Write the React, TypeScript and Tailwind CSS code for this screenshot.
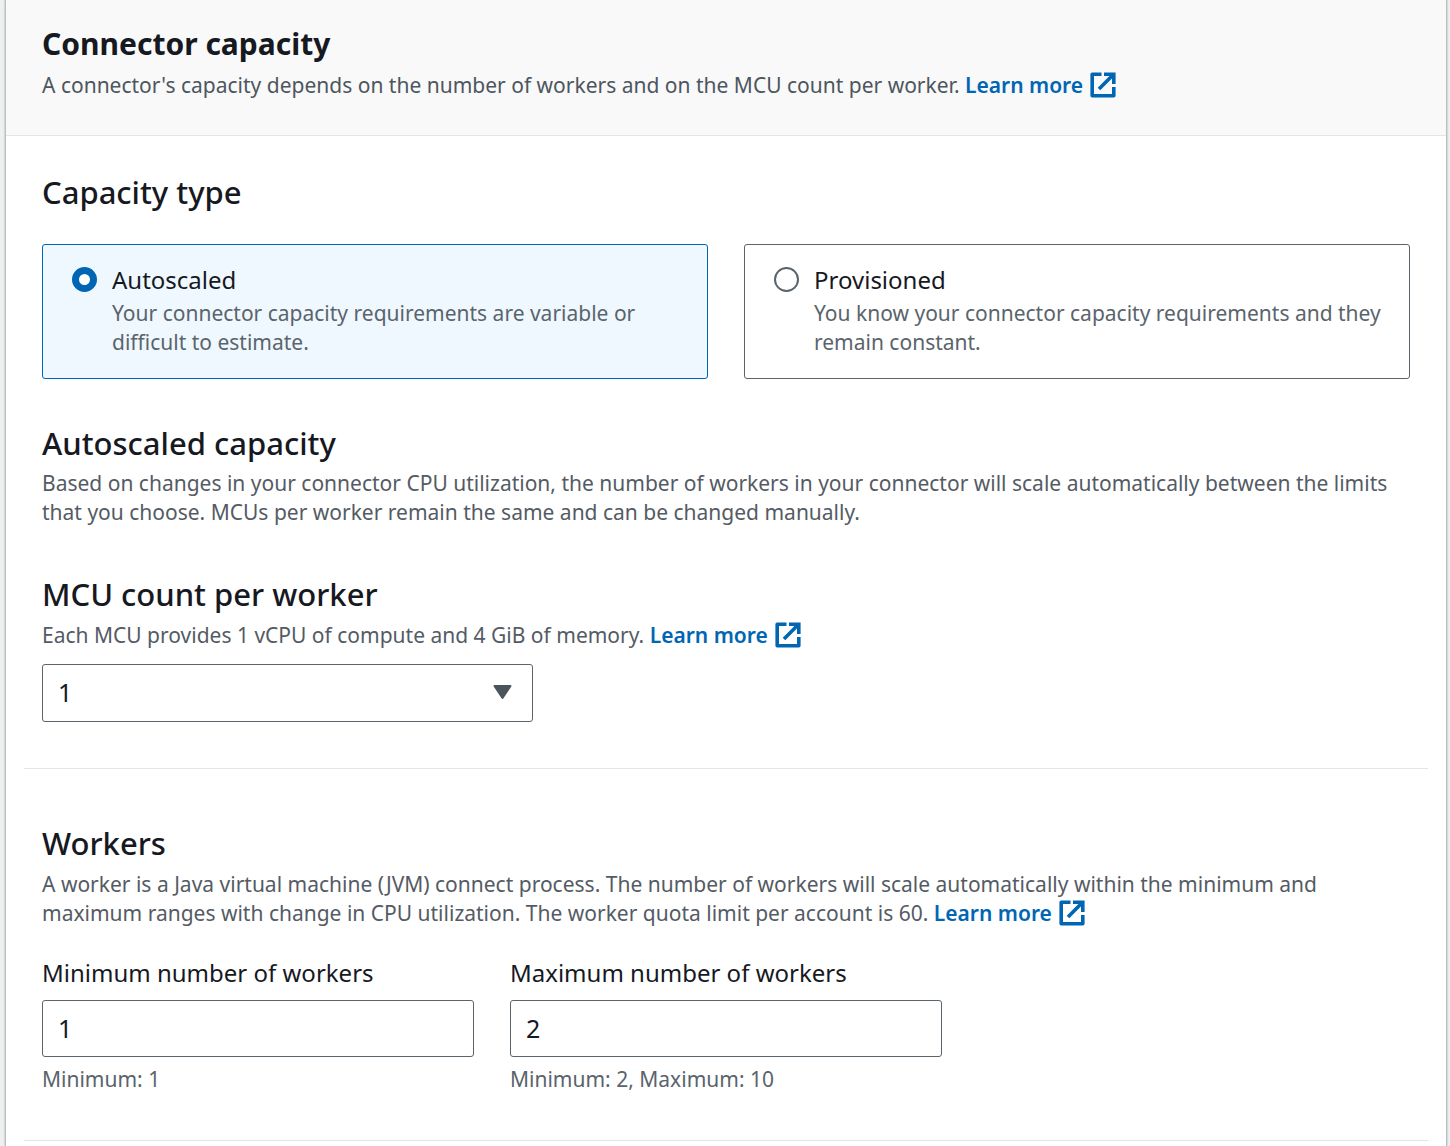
import { useState } from "react";
import type { ReactNode } from "react";

function ExternalIcon() {
  return (
    <svg viewBox="0 0 26 26" className="ml-[7px] inline-block size-[26px] align-[-5px]" fill="none" stroke="currentColor" strokeWidth="3.6" aria-hidden="true">
      <path d="M11.5 2.2H2.2V23.8H23.8V15" strokeLinejoin="round" />
      <path d="M14 2.2H23.8V12M23.4 2.6L9 17" />
    </svg>
  );
}

function LearnMore() {
  return (
    <a href="#learn-more" className="whitespace-nowrap font-semibold text-[#0066b3]">
      Learn more
      <ExternalIcon />
    </a>
  );
}

function Hint({ children }: { children: ReactNode }) {
  return <p className="text-[21px] leading-[29px] text-[#545b64]">{children}</p>;
}

function Heading({ children }: { children: ReactNode }) {
  return <h3 className="text-[31px] leading-[40px] font-medium">{children}</h3>;
}

type TileProps = {
  value: string;
  label: string;
  text: string;
  checked: boolean;
  onSelect: (value: string) => void;
};

function Tile({ value, label, text, checked, onSelect }: TileProps) {
  return (
    <label
      className={
        checked
          ? "flex gap-[15px] rounded-[3px] border border-[#0066b3] bg-[#f0f8ff] pt-[19px] pr-5 pb-[21px] pl-[29px]"
          : "flex gap-[15px] rounded-[3px] border border-[#5a646c] bg-white pt-[19px] pr-5 pb-[21px] pl-[29px]"
      }
    >
      <input
        type="radio"
        name="capacity-type"
        value={value}
        checked={checked}
        onChange={() => onSelect(value)}
        className="mt-[3px] size-[25px] shrink-0 appearance-none rounded-full border-2 border-[#5a646c] bg-white checked:border-[7px] checked:border-[#0066b3]"
      />
      <span className="flex flex-col gap-[3px]">
        <span className="text-[24px] leading-[32px] font-[450]">{label}</span>
        <span className="text-[21px] leading-[29px] text-[#5a646c]">{text}</span>
      </span>
    </label>
  );
}

function NumberField({ id, label, value, hint }: { id: string; label: string; value: string; hint: string }) {
  return (
    <div className="w-[432px]">
      <label htmlFor={id} className="block text-[24px] leading-[32px] font-[450]">
        {label}
      </label>
      <input
        id={id}
        type="text"
        inputMode="numeric"
        defaultValue={value}
        aria-describedby={`${id}-hint`}
        className="mt-[11px] block h-[57px] w-full rounded-[3px] border border-[#5a646c] bg-white px-[15px] pb-0.5 text-[25px] font-[450]"
      />
      <p id={`${id}-hint`} className="mt-2 text-[21px] leading-[29px] text-[#5a646c]">
        {hint}
      </p>
    </div>
  );
}

export default function App() {
  const [type, setType] = useState("autoscaled");
  return (
    <div className="min-h-screen bg-[#eff1f1] pr-[3px] pl-[5px] font-['Noto_Sans',sans-serif] text-[#16191f]">
      <main className="min-h-screen border-x border-[#b9c1c3] bg-white shadow-[0_0_2px_#a0a8aa]">
        <header className="border-b border-[#e4e6e6] bg-[#f9f9f9] px-9 pt-6 pb-[35px]">
          <h2 className="text-[30px] leading-[40px] font-bold">Connector capacity</h2>
          <p className="mt-[7px] text-[21px] leading-[29px] text-[#4d565e]">
            A connector's capacity depends on the number of workers and on the MCU count per worker. <LearnMore />
          </p>
        </header>

        <section className="px-9 pt-9">
          <Heading>Capacity type</Heading>
          <div className="mt-8 grid grid-cols-2 gap-9">
            <Tile value="autoscaled" label="Autoscaled" text="Your connector capacity requirements are variable or difficult to estimate." checked={type === "autoscaled"} onSelect={setType} />
            <Tile value="provisioned" label="Provisioned" text="You know your connector capacity requirements and they remain constant." checked={type === "provisioned"} onSelect={setType} />
          </div>
        </section>

        <section className="px-9 pt-11">
          <Heading>Autoscaled capacity</Heading>
          <div className="mt-[6px]">
            <Hint>
              Based on changes in your connector CPU utilization, the number of workers in your connector will scale automatically between the limits that you choose. MCUs per worker remain the same and can be changed manually.
            </Hint>
          </div>
        </section>

        <section className="px-9 pt-[47px] pb-[46px]">
          <Heading>
            <label htmlFor="mcu-count">MCU count per worker</label>
          </Heading>
          <div className="mt-[7px]">
            <Hint>
              Each MCU provides 1 vCPU of compute and 4 GiB of memory. <LearnMore />
            </Hint>
          </div>
          <div className="relative mt-[14px] w-[491px]">
            <select id="mcu-count" defaultValue="1" className="block h-[58px] w-full appearance-none rounded-[3px] border border-[#5a646c] bg-white px-[15px] text-[25px] font-[450]">
              <option>1</option>
              <option>2</option>
              <option>4</option>
              <option>8</option>
            </select>
            <svg viewBox="0 0 20 16" className="pointer-events-none absolute top-5 right-5 h-4 w-5" fill="#4a545c" stroke="#4a545c" strokeWidth="2" strokeLinejoin="round" aria-hidden="true">
              <path d="M1.5 2H17.5L9.5 14Z" />
            </svg>
          </div>
        </section>

        <hr className="mx-[18px] border-[#e4e6e6]" />

        <section className="px-9 pt-[54px] pb-[46px]">
          <Heading>Workers</Heading>
          <div className="mt-[7px]">
            <Hint>
              A worker is a Java virtual machine (JVM) connect process. The number of workers will scale automatically within the minimum and maximum ranges with change in CPU utilization. The worker quota limit per account is 60. <LearnMore />
            </Hint>
          </div>
          <div className="mt-[29px] flex gap-9">
            <NumberField id="min-workers" label="Minimum number of workers" value="1" hint="Minimum: 1" />
            <NumberField id="max-workers" label="Maximum number of workers" value="2" hint="Minimum: 2, Maximum: 10" />
          </div>
        </section>

        <hr className="mx-[18px] border-[#e4e6e6]" />
      </main>
    </div>
  );
}
